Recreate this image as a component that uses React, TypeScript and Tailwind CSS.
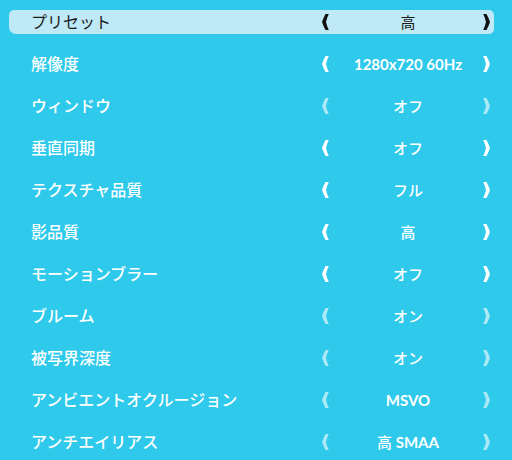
import React from "react";

type Row = { label: string; value: string; enabled: boolean };

const rows: Row[] = [
  { label: "プリセット", value: "高", enabled: true },
  { label: "解像度", value: "1280x720 60Hz", enabled: true },
  { label: "ウィンドウ", value: "オフ", enabled: false },
  { label: "垂直同期", value: "オフ", enabled: true },
  { label: "テクスチャ品質", value: "フル", enabled: true },
  { label: "影品質", value: "高", enabled: true },
  { label: "モーションブラー", value: "オフ", enabled: true },
  { label: "ブルーム", value: "オン", enabled: false },
  { label: "被写界深度", value: "オン", enabled: false },
  { label: "アンビエントオクルージョン", value: "MSVO", enabled: false },
  { label: "アンチエイリアス", value: "高 SMAA", enabled: false },
];

function Chevron({ dir, color }: { dir: "left" | "right"; color: string }) {
  return (
    <svg width="7" height="16" viewBox="0 0 7 16" className="shrink-0">
      <path
        d={
          dir === "left"
            ? "M6.8 0 L3.5 0 Q1.2 4.2 0 8 Q1.2 11.8 3.5 16 L6.8 16 Q4.8 11.8 4 8 Q4.8 4.2 6.8 0 Z"
            : "M0.2 0 L3.5 0 Q5.8 4.2 7 8 Q5.8 11.8 3.5 16 L0.2 16 Q2.2 11.8 3 8 Q2.2 4.2 0.2 0 Z"
        }
        fill={color}
      />
    </svg>
  );
}

function Value({ text, selected }: { text: string; selected: boolean }) {
  const parts = text.split(/([\u3000-\u9fff\uff00-\uffef]+)/).filter((p) => p.length > 0);
  return (
    <>
      {parts.map((p, i) => {
        const cjk = /[\u3000-\u9fff\uff00-\uffef]/.test(p);
        const w = selected ? "font-normal" : cjk ? "font-medium" : "font-bold";
        return (
          <span key={i} className={w}>
            {p}
          </span>
        );
      })}
    </>
  );
}

export default function App() {
  return (
    <div
      className="w-[512px] h-[460px] overflow-hidden bg-[#2ec9eb]"
      style={{ fontFamily: '"Lato", "Noto Sans CJK JP", sans-serif' }}
    >
      <div className="flex flex-col pt-[10px] gap-[18px]">
        {rows.map((r, i) => {
          const selected = i === 0;
          const chevColor = selected
            ? "#111111"
            : r.enabled
            ? "#ffffff"
            : "rgba(255,255,255,0.6)";
          return (
            <div
              key={i}
              className={
                "ml-[9px] w-[485px] h-6 flex items-center pl-[22px] pr-[4px] rounded-[5px] rounded-bl-[7px] " +
                (selected ? "bg-[#bfe9f7]" : "")
              }
            >
              <div
                className={
                  "flex-1 text-[16px] leading-none whitespace-nowrap " +
                  (selected ? "text-[#1a1a1a] font-normal" : "text-white font-medium")
                }
              >
                {r.label}
              </div>
              <div className="w-[168px] flex items-center">
                <Chevron dir="left" color={chevColor} />
                <div
                  className={
                    "flex-1 text-center text-[15px] leading-none whitespace-nowrap pl-[4px] " +
                    (selected ? "text-[#1a1a1a]" : "text-white")
                  }
                >
                  <Value text={r.value} selected={selected} />
                </div>
                <Chevron dir="right" color={chevColor} />
              </div>
            </div>
          );
        })}
      </div>
    </div>
  );
}
